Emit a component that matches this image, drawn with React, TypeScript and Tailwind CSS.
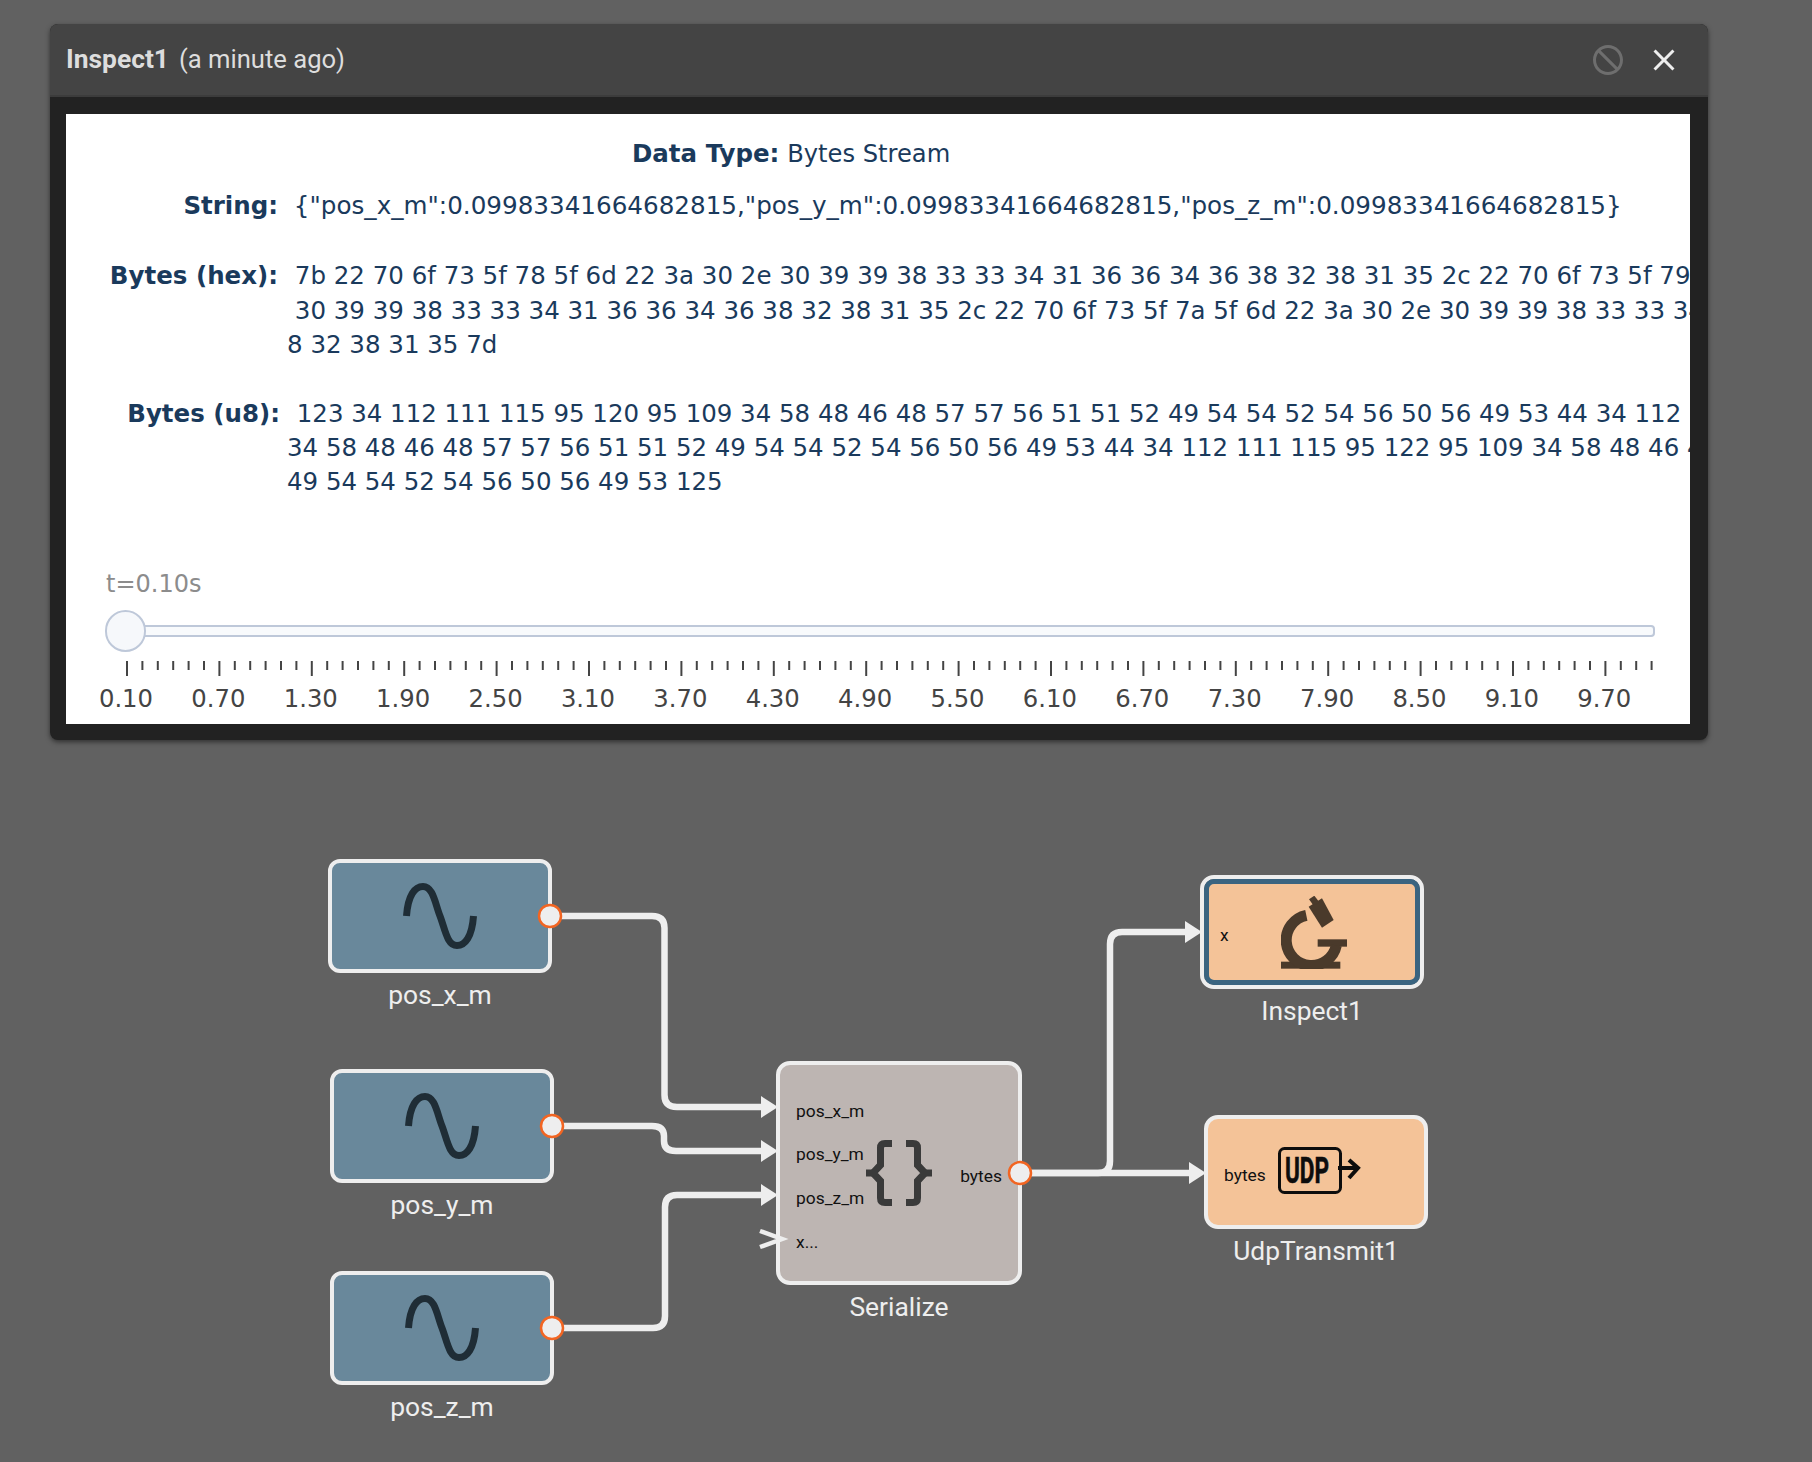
const sans = "font-['DejaVu_Sans',sans-serif]";
const roboto = "font-['Roboto',sans-serif]";

const hexLines = [
  ' 7b 22 70 6f 73 5f 78 5f 6d 22 3a 30 2e 30 39 39 38 33 33 34 31 36 36 34 36 38 32 38 31 35 2c 22 70 6f 73 5f 79 5f 6d 22 3a 30 2e',
  ' 30 39 39 38 33 33 34 31 36 36 34 36 38 32 38 31 35 2c 22 70 6f 73 5f 7a 5f 6d 22 3a 30 2e 30 39 39 38 33 33 34 31 36 36 34 36 3',
  '8 32 38 31 35 7d',
];
const u8Lines = [
  ' 123 34 112 111 115 95 120 95 109 34 58 48 46 48 57 57 56 51 51 52 49 54 54 52 54 56 50 56 49 53 44 34 112 111 115 95 121 95 109',
  '34 58 48 46 48 57 57 56 51 51 52 49 54 54 52 54 56 50 56 49 53 44 34 112 111 115 95 122 95 109 34 58 48 46 48 57 57 56 51 51 52',
  '49 54 54 52 54 56 50 56 49 53 125',
];
const sliderLabels = ['0.10', '0.70', '1.30', '1.90', '2.50', '3.10', '3.70', '4.30', '4.90', '5.50', '6.10', '6.70', '7.30', '7.90', '8.50', '9.10', '9.70'];
const ticks = Array.from({ length: 100 }, (_, i) => i);

function Sine() {
  return (
    <svg width="74" height="66" viewBox="0 0 74 66" fill="none">
      <path
        d="M3.5 33C5 12 12 3.5 20 3.5C30 3.5 32 20 37 33C42 46 44 62.5 54 62.5C62 62.5 69 54 70.5 33"
        stroke="#1f2d36"
        strokeWidth="7"
      />
    </svg>
  );
}

function Microscope() {
  return (
    <svg width="66" height="73" viewBox="302 108 198 219" fill="#4a3a2b">
      <polygon points="385,140 425,115 460,180 425,203" />
      <polygon points="386,118 402,107 417,127 400,137" />
      <rect x="302" y="305" width="178" height="21" />
      <rect x="412" y="238" width="88" height="22" />
      <path d="M378 166A76 76 0 1 0 468 256" fill="none" stroke="#4a3a2b" strokeWidth="33" />
    </svg>
  );
}

function UdpIcon() {
  return (
    <svg className="-mt-[4px]" width="83" height="47" viewBox="0 0 83 47" fill="none">
      <rect x="1.5" y="1.5" width="61" height="44" rx="5" stroke="#0d0d0d" strokeWidth="3" />
      <text
        x="7"
        y="36"
        textLength="44"
        lengthAdjust="spacingAndGlyphs"
        fontFamily="Roboto, sans-serif"
        fontWeight="700"
        fontSize="36"
        fill="#0d0d0d"
        stroke="#0d0d0d"
        strokeWidth="0.6"
      >
        UDP
      </text>
      <path d="M60 21H80M71 13L80 21L71 31" stroke="#0d0d0d" strokeWidth="4" />
    </svg>
  );
}

function Braces() {
  return (
    <svg width="66" height="66" viewBox="0 0 66 66" fill="none" stroke="#3a3a3a" strokeWidth="7">
      <path d="M26 3.5H19Q14.5 3.5 14.5 8V25L7 33L14.5 41V58Q14.5 62.5 19 62.5H26" />
      <path d="M0 33H9" />
      <path d="M40 3.5H47Q51.5 3.5 51.5 8V25L59 33L51.5 41V58Q51.5 62.5 47 62.5H40" />
      <path d="M57 33H66" />
    </svg>
  );
}

function NodeLabel({ children }: { children: string }) {
  return <div className="mt-[8px] text-center text-[26.4px] leading-[28px] text-[#eeeeee]">{children}</div>;
}

function SignalNode({ label, className }: { label: string; className: string }) {
  return (
    <div className={`absolute w-[224px] ${className}`}>
      <div className="flex h-[114px] items-center justify-center rounded-[12px] border-4 border-[#eeeeee] bg-[#69889b]">
        <Sine />
      </div>
      <NodeLabel>{label}</NodeLabel>
    </div>
  );
}

function Wires() {
  const head = (x: number, y: number) => `${x - 17},${y - 11} ${x},${y} ${x - 17},${y + 11}`;
  return (
    <svg className="absolute inset-0" width="1812" height="1462" fill="none">
      <g stroke="#eeeeee" strokeWidth="6.5">
        <path d="M552 916H652Q664.5 916 664.5 928V1095Q664.5 1107 677 1107H765" />
        <path d="M554 1126H652Q664 1126 664 1136V1141Q664 1151 676 1151H765" />
        <path d="M554 1328H653Q665 1328 665 1316V1207Q665 1195 677 1195H765" />
        <path d="M1020 1173H1098Q1110 1173 1110 1161V944Q1110 932 1122 932H1190" />
        <path d="M1020 1173H1195" />
        <path d="M760 1231L782 1239L760 1247" strokeWidth="4.5" />
      </g>
      <g fill="#eeeeee">
        <polygon points={head(778, 1107)} />
        <polygon points={head(778, 1151)} />
        <polygon points={head(778, 1195)} />
        <polygon points={head(1202, 932)} />
        <polygon points={head(1206, 1173)} />
      </g>
      <g fill="#eeeeee" stroke="#f26522" strokeWidth="2.5">
        <circle cx="550" cy="916" r="11" />
        <circle cx="552" cy="1126" r="11" />
        <circle cx="552" cy="1328" r="11" />
        <circle cx="1020" cy="1173" r="11" />
      </g>
    </svg>
  );
}

function Canvas() {
  return (
    <div className={`absolute inset-0 ${roboto}`}>
      <SignalNode label="pos_x_m" className="left-[328px] top-[859px]" />
      <SignalNode label="pos_y_m" className="left-[330px] top-[1069px]" />
      <SignalNode label="pos_z_m" className="left-[330px] top-[1271px]" />

      <div className="absolute left-[776px] top-[1061px] w-[246px]">
        <div className="flex h-[224px] items-center rounded-[14px] border-4 border-[#eeeeee] bg-[#bdb5b2] text-[17.4px] leading-[20px] text-[#111111]">
          <div className="ml-4 flex w-[70px] flex-col pt-[8px]">
            <span className="h-[43.7px] leading-[43.7px]">pos_x_m</span>
            <span className="h-[43.7px] leading-[43.7px]">pos_y_m</span>
            <span className="h-[43.7px] leading-[43.7px]">pos_z_m</span>
            <span className="h-[43.7px] leading-[43.7px]">x...</span>
          </div>
          <Braces />
          <span className="ml-auto mr-4 pt-[6px]">bytes</span>
        </div>
        <NodeLabel>Serialize</NodeLabel>
      </div>

      <div className="absolute left-[1200px] top-[875px] w-[224px]">
        <div className="h-[114px] rounded-[14px] border-4 border-[#eeeeee]">
          <div className="flex h-full items-center rounded-[10px] border-[5px] border-[#3a6480] bg-[#f4c398] text-[17.4px] text-[#111111]">
            <span className="ml-[11px] w-[61px] pt-[6px]">x</span>
            <Microscope />
          </div>
        </div>
        <NodeLabel>Inspect1</NodeLabel>
      </div>

      <div className="absolute left-[1204px] top-[1115px] w-[224px]">
        <div className="flex h-[114px] items-center rounded-[14px] border-4 border-[#eeeeee] bg-[#f4c398] text-[17.4px] text-[#111111]">
          <span className="ml-4 w-[54px] pt-[6px]">bytes</span>
          <UdpIcon />
        </div>
        <NodeLabel>UdpTransmit1</NodeLabel>
      </div>

      <Wires />
    </div>
  );
}

function InspectDialog() {
  return (
    <div className="relative ml-[50px] w-[1658px] overflow-hidden rounded-[8px] bg-[#222222] shadow-[0_2px_5px_rgba(0,0,0,0.5)]">
      <div className={`flex h-[73px] items-center justify-between border-b-2 border-[#3c3c3c] bg-[#444444] pl-4 pr-[26px] text-[#dddddd] ${roboto}`}>
        <div>
          <span className="text-[26.4px] font-bold">Inspect1</span>
          <span className="ml-[10px] text-[25.6px]">(a minute ago)</span>
        </div>
        <div className="flex items-center gap-5">
          <svg width="36" height="36" viewBox="0 0 24 24" fill="#6e6e6e">
            <path d="M12 2C6.48 2 2 6.48 2 12s4.48 10 10 10 10-4.48 10-10S17.52 2 12 2zm0 18c-4.42 0-8-3.58-8-8 0-1.85.63-3.55 1.69-4.9L16.9 18.31C15.55 19.37 13.85 20 12 20zm6.31-3.1L7.1 5.69C8.45 4.63 10.15 4 12 4c4.42 0 8 3.58 8 8 0 1.85-.63 3.55-1.69 4.9z" />
          </svg>
          <svg width="36" height="36" viewBox="0 0 24 24" fill="#eeeeee">
            <path d="M19 6.41 17.59 5 12 10.59 6.41 5 5 6.41 10.59 12 5 17.59 6.41 19 12 13.41 17.59 19 19 17.59 13.41 12z" />
          </svg>
        </div>
      </div>

      <div className={`mb-4 ml-4 mr-[18px] mt-[17px] h-[610px] overflow-hidden bg-white pt-[23px] text-[24.5px] leading-[34.2px] text-[#1a3a5c] ${sans}`}>
        <div className="ml-[566px] whitespace-pre">
          <b>Data Type:</b> <span className="text-[24.2px]">Bytes Stream</span>
        </div>

        <div className="mt-[18px] flex">
          <b className="w-[212px] shrink-0 text-right">String:</b>
          <div className="ml-[8px] whitespace-pre text-[24.63px]">{' {"pos_x_m":0.09983341664682815,"pos_y_m":0.09983341664682815,"pos_z_m":0.09983341664682815}'}</div>
        </div>

        <div className="mt-[36px] flex">
          <b className="w-[212px] shrink-0 text-right">Bytes (hex):</b>
          <div className="ml-[9px] whitespace-pre">
            {hexLines.map((line) => (
              <div key={line}>{line}</div>
            ))}
          </div>
        </div>

        <div className="mt-[35px] flex">
          <b className="w-[214px] shrink-0 text-right">Bytes (u8):</b>
          <div className="ml-[7px] whitespace-pre text-[24.46px]">
            {u8Lines.map((line, i) => (
              <div key={line} className={i === 0 ? 'indent-[2px]' : ''}>
                {line}
              </div>
            ))}
          </div>
        </div>

        <div className="ml-[40px] mt-[70px] text-[24px] leading-[28px] text-[#8c8c8c]">t=0.10s</div>

        <div className="relative ml-[60px] mt-[12px] flex h-[42px] w-[1529px] items-center">
          <div className="h-[12px] w-full rounded-[4px] border-2 border-[#bec8d9] bg-[#f8fafc]" />
          <div className="absolute -left-[21px] h-[42px] w-[41px] rounded-full border-2 border-[#bec8d9] bg-[#f6f8fb]" />
        </div>

        <svg className="ml-[60px] mt-[9px] block" width="1530" height="15" stroke="#444444" strokeWidth="2">
          {ticks.map((i) => (
            <line key={i} x1={i * 15.4 + 1} x2={i * 15.4 + 1} y1="0" y2={i % 6 === 0 ? 15 : 9} />
          ))}
        </svg>

        <div className="ml-[13.8px] mt-[9px] flex text-[24.3px] leading-[28px] text-[#444444]">
          {sliderLabels.map((label) => (
            <span key={label} className="w-[92.4px] shrink-0 text-center">
              {label}
            </span>
          ))}
        </div>
      </div>
    </div>
  );
}

export default function App() {
  return (
    <div className="relative h-[1462px] w-[1812px] overflow-hidden bg-[#616161] pt-[24px]">
      <Canvas />
      <InspectDialog />
    </div>
  );
}
